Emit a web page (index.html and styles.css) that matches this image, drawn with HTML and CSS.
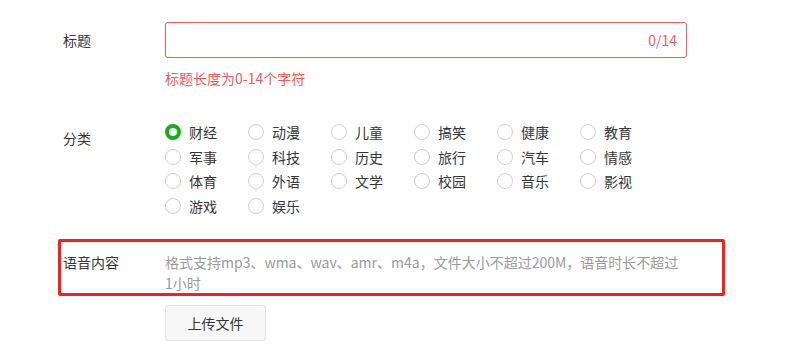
FILE: index.html
```html
<!DOCTYPE html>
<html lang="zh-CN">
<head>
    <meta charset="UTF-8">
    <meta name="viewport" content="width=device-width, initial-scale=1.0">
    <title>上传语音</title>
    <link rel="stylesheet" href="styles.css">
</head>
<body>
    <div class="form">
        <div class="form-row title-row">
            <label class="form-label">标题</label>
            <div class="form-field">
                <div class="input-box error">
                    <input type="text" class="text-input">
                    <span class="counter">0/14</span>
                </div>
                <p class="error-tip">标题长度为0-14个字符</p>
            </div>
        </div>

        <div class="form-row category-row">
            <label class="form-label">分类</label>
            <div class="form-field">
                <div class="radio-grid">
                    <label class="radio checked"><span class="dot"></span>财经</label>
                    <label class="radio"><span class="dot"></span>动漫</label>
                    <label class="radio"><span class="dot"></span>儿童</label>
                    <label class="radio"><span class="dot"></span>搞笑</label>
                    <label class="radio"><span class="dot"></span>健康</label>
                    <label class="radio"><span class="dot"></span>教育</label>
                    <label class="radio"><span class="dot"></span>军事</label>
                    <label class="radio"><span class="dot"></span>科技</label>
                    <label class="radio"><span class="dot"></span>历史</label>
                    <label class="radio"><span class="dot"></span>旅行</label>
                    <label class="radio"><span class="dot"></span>汽车</label>
                    <label class="radio"><span class="dot"></span>情感</label>
                    <label class="radio"><span class="dot"></span>体育</label>
                    <label class="radio"><span class="dot"></span>外语</label>
                    <label class="radio"><span class="dot"></span>文学</label>
                    <label class="radio"><span class="dot"></span>校园</label>
                    <label class="radio"><span class="dot"></span>音乐</label>
                    <label class="radio"><span class="dot"></span>影视</label>
                    <label class="radio"><span class="dot"></span>游戏</label>
                    <label class="radio"><span class="dot"></span>娱乐</label>
                </div>
            </div>
        </div>

        <div class="form-row voice-row">
            <label class="form-label">语音内容</label>
            <div class="form-field">
                <p class="hint">格式支持mp3、wma、wav、amr、m4a，文件大小不超过200M，语音时长不超过1小时</p>
            </div>
        </div>

        <div class="form-row upload-row">
            <span class="form-label"></span>
            <div class="form-field">
                <button type="button" class="upload-btn">上传文件</button>
            </div>
        </div>
    </div>
</body>
</html>
```

FILE: styles.css
```css
* {
    margin: 0;
    padding: 0;
    box-sizing: border-box;
}

body {
    font-family: "Noto Sans CJK SC", "Microsoft YaHei", sans-serif;
    font-size: 14px;
    color: #353535;
    background: #fff;
}

.form {
    padding-left: 63px;
    width: 687px;
}

.form-row {
    display: flex;
}

.form-label {
    width: 102px;
    flex-shrink: 0;
    line-height: 20px;
}

.form-field {
    flex: 1;
}

/* 标题 */
.title-row {
    margin-top: 22px;
}

.title-row .form-label {
    line-height: 36px;
}

.input-box {
    display: flex;
    align-items: center;
    height: 36px;
    border: 1px solid #e7e7eb;
    border-radius: 3px;
    padding: 0 9px 0 10px;
}

.input-box.error {
    border-color: #f35a5a;
}

.text-input {
    flex: 1;
    border: none;
    outline: none;
    font: inherit;
    height: 100%;
}

.counter {
    color: #f35a5a;
}

.error-tip {
    margin-top: 10px;
    line-height: 20px;
    color: #f35a5a;
}

/* 分类 */
.category-row {
    margin-top: 32px;
}

.category-row .form-label {
    padding-top: 8px;
}

.radio-grid {
    display: grid;
    grid-template-columns: repeat(6, 83px);
    grid-auto-rows: 24.5px;
}

.radio {
    display: flex;
    align-items: center;
    gap: 8px;
    line-height: 20px;
}

.dot {
    width: 16px;
    height: 16px;
    border: 1px solid #d0d0d0;
    border-radius: 50%;
    background: #fff;
}

.radio.checked .dot {
    border: 4.5px solid #1aad19;
}

/* 语音内容 */
.voice-row {
    margin-top: 21px;
    margin-left: -5px;
    margin-right: -38px;
    height: 57px;
    border: 3px solid #fa1e14;
    border-radius: 2px;
    padding: 10px 0 0 2px;
}

.voice-row .form-label {
    line-height: 21px;
}

.voice-row .form-field {
    flex: none;
    width: 520px;
}

.hint {
    color: #9a9a9a;
    line-height: 21px;
}

/* 上传 */
.upload-row {
    margin-top: 9px;
}

.upload-btn {
    width: 101px;
    height: 36px;
    border: 1px solid #e4e4e4;
    border-radius: 3px;
    background: #f7f7f7;
    color: #353535;
    font: inherit;
    cursor: pointer;
}
```
